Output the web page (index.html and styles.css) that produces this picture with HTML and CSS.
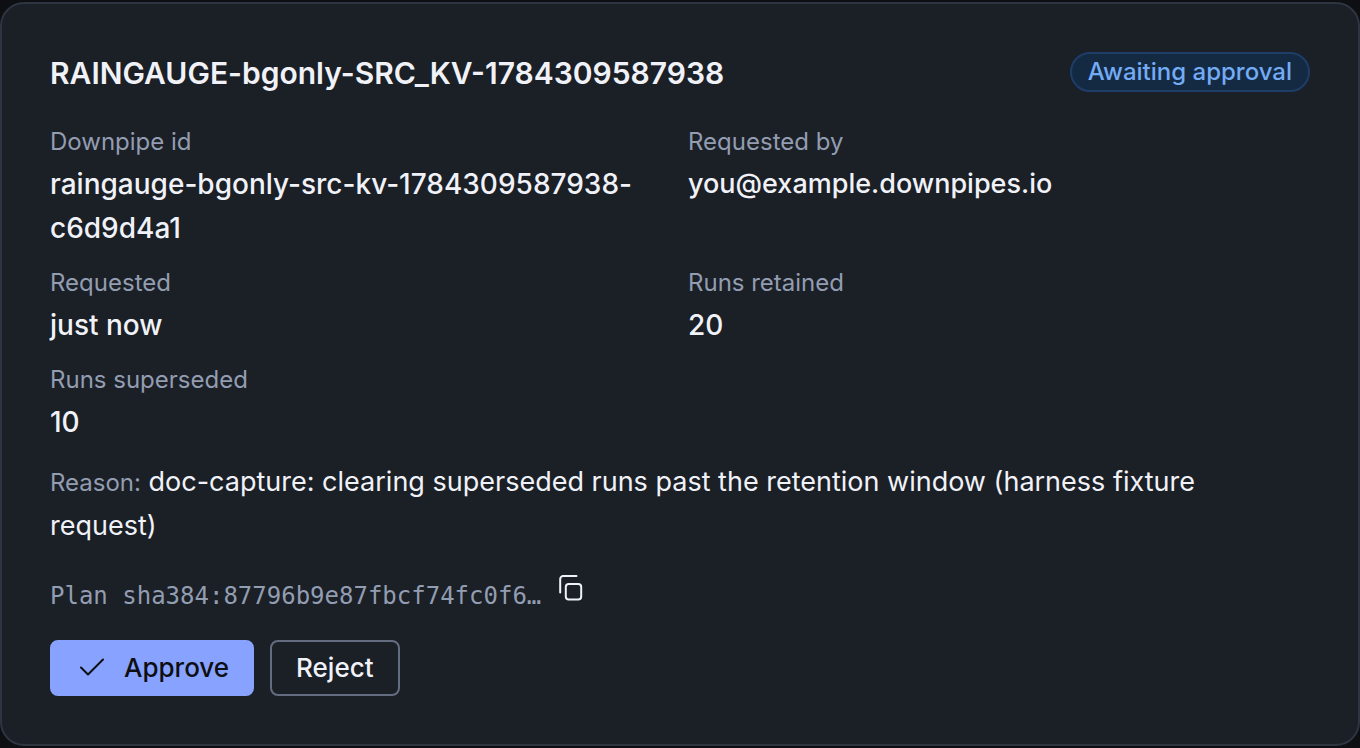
FILE: index.html
```html
<!DOCTYPE html>
<html lang="en">
<head>
<meta charset="utf-8">
<meta name="viewport" content="width=device-width, initial-scale=1">
<title>Approval request</title>
<link rel="stylesheet" href="styles.css">
</head>
<body>
<main class="card">
  <header class="card-header">
    <h1 class="title">RAINGAUGE-bgonly-SRC_KV-1784309587938</h1>
    <span class="badge">Awaiting approval</span>
  </header>
  <dl class="details">
    <div class="field"><dt>Downpipe id</dt><dd>raingauge-bgonly-src-kv-1784309587938-c6d9d4a1</dd></div>
    <div class="field"><dt>Requested by</dt><dd class="email">you@example.downpipes.io</dd></div>
    <div class="field"><dt>Requested</dt><dd>just now</dd></div>
    <div class="field"><dt>Runs retained</dt><dd>20</dd></div>
    <div class="field"><dt>Runs superseded</dt><dd>10</dd></div>
  </dl>
  <p class="reason"><span class="reason-label">Reason:</span> doc-capture: clearing superseded runs past the retention window (harness fixture request)</p>
  <div class="plan">
    <code class="hash">Plan sha384:87796b9e87fbcf74fc0f6…</code>
    <button class="copy" type="button" aria-label="Copy plan hash">
      <svg class="copy-icon" viewBox="0 0 24 26" fill="none" stroke="currentColor" stroke-width="2" stroke-linecap="round">
        <rect x="6.8" y="9" width="15.4" height="15.4" rx="3"/>
        <path d="M1.2 17.5V4a3 3 0 0 1 3-3h13.3"/>
      </svg>
    </button>
  </div>
  <div class="actions">
    <button class="btn btn-primary" type="button">
      <svg class="check-icon" viewBox="0 0 28 24" fill="none" stroke="currentColor" stroke-width="2" stroke-linecap="round" stroke-linejoin="round">
        <path d="M5 11.5 12 18.5 27 3.5"/>
      </svg>
      Approve
    </button>
    <button class="btn btn-outline" type="button">Reject</button>
  </div>
</main>
</body>
</html>
```
FILE: styles.css
```css
* {
  box-sizing: border-box;
}

body {
  margin: 0;
  padding: 2px 0;
  background: #0e0f13;
  color: #f0f2f8;
  font-family: Inter, "Liberation Sans", sans-serif;
  font-size: 27px;
  line-height: 44px;
}

.card {
  padding: 48px;
  border: 2px solid #2e3440;
  border-radius: 24px;
  background: #1b1f26;
}

.card-header {
  display: flex;
  align-items: flex-start;
  justify-content: space-between;
  gap: 16px;
  margin-bottom: 30px;
}

.title {
  margin: 0;
  font-size: 30px;
  font-weight: 600;
  line-height: 42px;
}

.badge {
  padding: 0 16px;
  border: 2px solid #1e3d68;
  border-radius: 20px;
  background: #142a43;
  color: #73acf5;
  font-size: 24px;
  font-weight: 500;
  line-height: 36px;
  white-space: nowrap;
}

.details {
  display: grid;
  grid-template-columns: 1fr 1fr;
  gap: 15px 16px;
  margin: 0 0 16px;
}

.field {
  display: flex;
  flex-direction: column;
  gap: 2px;
  min-width: 0;
}

dt {
  color: #929db1;
  font-size: 24px;
  line-height: 36px;
}

dd {
  margin: 0;
  font-size: 28px;
  font-weight: 500;
  line-height: 44px;
  overflow-wrap: anywhere;
}

.email {
  font-size: 27px;
}

.reason {
  margin: 0 0 15px;
  padding-right: 16px;
}

.reason-label {
  color: #929db1;
  font-size: 24px;
  line-height: 24px;
}

.plan {
  display: flex;
  align-items: flex-end;
  gap: 18px;
  margin-bottom: 27px;
}

.hash {
  color: #929db1;
  font-family: "DejaVu Sans Mono", monospace;
  font-size: 24px;
  line-height: 34px;
}

.copy {
  display: flex;
  align-items: center;
  height: 50px;
  padding: 0;
  border: 0;
  background: none;
  color: inherit;
}

.copy-icon {
  width: 24px;
  height: 26px;
}

.actions {
  display: flex;
  gap: 16px;
}

.btn {
  display: flex;
  align-items: center;
  gap: 20px;
  height: 56px;
  padding: 0 24px;
  border: 2px solid #646d80;
  border-radius: 8px;
  font: 500 26px/36px Inter, "Liberation Sans", sans-serif;
}

.btn-primary {
  padding-right: 23px;
  border-color: #87a3ff;
  background: #87a3ff;
  color: #0e0f13;
}

.btn-outline {
  background: transparent;
  color: #f0f2f8;
}

.check-icon {
  width: 28px;
  height: 24px;
}
```
